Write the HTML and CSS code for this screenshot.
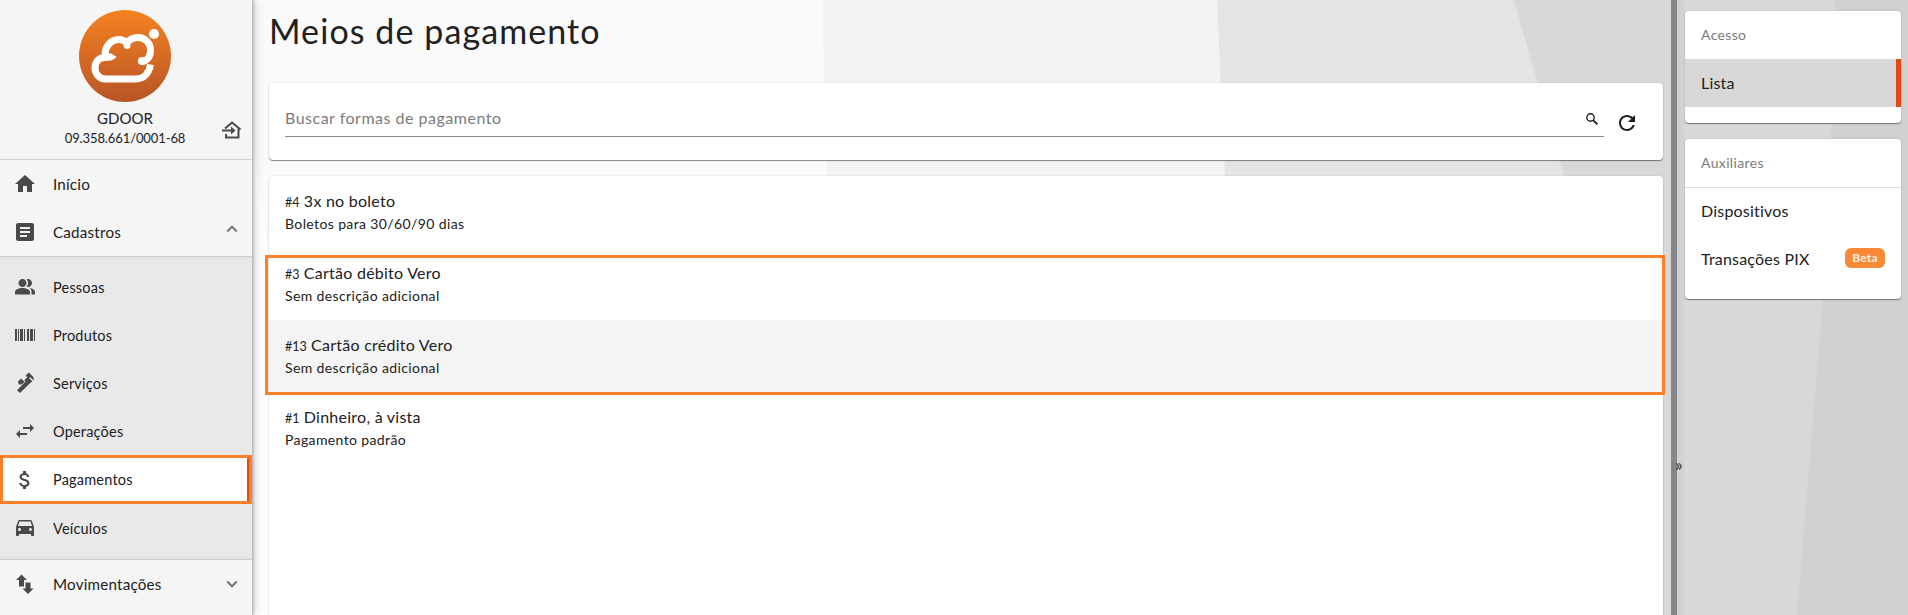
FILE: index.html
```html
<!DOCTYPE html>
<html lang="pt-BR">
<head>
<meta charset="utf-8">
<title>Meios de pagamento</title>
<link rel="stylesheet" href="styles.css">
</head>
<body>
<div class="app">
  <svg class="backdrop" viewBox="0 0 1908 615" preserveAspectRatio="none" aria-hidden="true">
    <rect width="1908" height="615" fill="#fafafa"/>
    <path d="M252 130L256 165L267 242H290V615H252z" fill="#fff"/>
    <path d="M822 0H1908V615H840z" fill="#f3f3f3"/>
    <path d="M1217 0H1908V615H1245z" fill="#e4e4e4"/>
    <path d="M1514 0H1908V615H1600L1564 176z" fill="#d8d8d8"/>
    <path d="M1835.5 0H1908V615H1797L1823 300L1831 139z" fill="#d0d0d0"/>
  </svg>

  <aside class="sidebar">
    <header class="company">
      <svg class="logo" viewBox="0 0 92 92">
        <defs><linearGradient id="lg" x1="0" y1="0" x2="0" y2="1"><stop offset="0" stop-color="#f58220"/><stop offset="1" stop-color="#b85427"/></linearGradient></defs>
        <circle cx="46" cy="46" r="46" fill="url(#lg)"/>
        <g fill="none" stroke="#fff" stroke-width="7">
          <path d="M71.500 54.500C70 63 65 69 57 69H27C20 69 16 63.500 16 58C16 52 20 47.500 26 47.500C30 47.500 33 47.500 34.500 45M26.500 47.500C24.500 37 32 29.500 40 29.500C44 29.500 46 31 48 33C50 30 53 27.500 59 27.500C67 27.500 71.500 34 71.500 40C71.500 47 68 51 63 52"/>
        </g>
        <circle cx="48" cy="35.500" r="3.400" fill="#fff"/><circle cx="63" cy="51" r="4" fill="#fff"/>
        <circle cx="75" cy="24" r="5" fill="#fff"/>
      </svg>
      <div class="company-name">GDOOR</div>
      <div class="company-id">09.358.661/0001-68</div>
      <svg class="exit" viewBox="0 0 20 18" fill="none" stroke="#4a4a4a" stroke-width="2"><path d="M3 7.500L10 1.500L18.500 8.500M16.500 7V16.500H4V13M0 9.500H11"/><path d="M9 5.500L13.500 9.500L9 13.500z" fill="#4a4a4a" stroke="none"/></svg>
    </header>
    <nav>
      <a class="item"><svg class="icon" viewBox="0 0 24 24"><path d="M10 20v-6h4v6h5v-8h3L12 3 2 12h3v8z"/></svg>Início</a>
      <a class="item"><svg class="icon" viewBox="0 0 24 24"><path d="M19 3H5c-1.100 0-2 .9-2 2v14c0 1.100.9 2 2 2h14c1.100 0 2-.9 2-2V5c0-1.100-.9-2-2-2zm-5 14H7v-2h7v2zm3-4H7v-2h10v2zm0-4H7V7h10v2z"/></svg>Cadastros<svg class="chevron chevron-up" viewBox="0 0 12 8"><path d="M1.200 6.500L6 1.700L10.800 6.500"/></svg></a>
      <div class="submenu">
        <a class="item"><svg class="icon" viewBox="0 0 24 24"><path d="M16.500 13.100C18 14 18.500 15.300 18.500 17v2.500H22v-2.500c0-2.200-2.800-3.500-5.500-3.900zM15 12c2.210 0 4-1.790 4-4s-1.790-4-4-4c-.47 0-.91.100-1.330.24C14.500 5.270 15 6.580 15 8s-.5 2.730-1.330 3.760c.42.140.86.240 1.330.24zM9.500 12c2.210 0 4-1.790 4-4s-1.790-4-4-4-4 1.790-4 4 1.790 4 4 4zm0 1c-2.670 0-7.500 1.340-7.500 4v2.500h15V17c0-2.660-4.830-4-7.500-4z"/></svg>Pessoas</a>
        <a class="item"><svg class="icon" viewBox="0 0 24 24"><path d="M2 6h2v12H2zM5 6h1v12H5zM7 6h3v12H7zM11 6h1v12h-1zM14 6h2v12h-2zM17 6h3v12h-3zM21 6h1v12h-1z"/></svg>Produtos</a>
        <a class="item"><svg class="icon" viewBox="0 0 24 24"><path d="M4 19.200L12.600 10.600L11.200 9.200L14.200 6.200L12.600 4.600L15.800 1.600L20.600 6.300V9.500L17.300 6.300L16.200 7.400L19.400 10.300L15.600 13.400L7 22zM5 10.600L8 7.600L11.600 10.800L8.600 13.400H5.800z"/></svg>Serviços</a>
        <a class="item"><svg class="icon" viewBox="0 0 24 24"><path d="M7 11L3 15l4 4v-3h7v-2H7v-3zM21 9l-4-4v3h-7v2h7v3l4-4z"/></svg>Operações</a>
        <a class="item active"><svg class="icon" viewBox="0 0 24 24"><path d="M11.800 10.900c-2.270-.59-3-1.200-3-2.150 0-1.090 1.010-1.850 2.700-1.850 1.780 0 2.440.85 2.500 2.100h2.210c-.07-1.720-1.120-3.300-3.210-3.810V3h-3v2.160c-1.940.42-3.500 1.680-3.500 3.610 0 2.310 1.910 3.460 4.700 4.130 2.500.6 3 1.480 3 2.410 0 .69-.49 1.790-2.700 1.790-2.060 0-2.870-.92-2.980-2.100h-2.200c.12 2.190 1.760 3.420 3.680 3.830V21h3v-2.150c1.950-.37 3.500-1.500 3.500-3.550 0-2.840-2.430-3.810-4.700-4.400z"/></svg>Pagamentos</a>
        <a class="item"><svg class="icon" viewBox="0 0 24 24"><path d="M18.920 5.010C18.720 4.420 18.160 4 17.500 4h-11c-.66 0-1.210.42-1.420 1.010L3 11v8c0 .55.450 1 1 1h1c.55 0 1-.45 1-1v-1h12v1c0 .55.450 1 1 1h1c.55 0 1-.45 1-1v-8l-2.080-5.990zM6.500 15c-.83 0-1.500-.67-1.500-1.500S5.670 12 6.500 12s1.500.67 1.500 1.500S7.330 15 6.500 15zm11 0c-.83 0-1.500-.67-1.500-1.500s.67-1.500 1.500-1.500 1.500.67 1.500 1.500-.67 1.500-1.500 1.500zM5 10l1.500-4.500h11L19 10H5z"/></svg>Veículos</a>
      </div>
      <a class="item"><svg class="icon" viewBox="0 0 24 24"><path d="M9 3L3.500 8.500H6.500V15H11.500V8.500H14.500zM13 11H18V17H21L15.500 22.500L10 17H13z" transform="translate(-.5 -.5)"/></svg>Movimentações<svg class="chevron" viewBox="0 0 12 8"><path d="M1.200 1.500L6 6.300L10.800 1.500"/></svg></a>
    </nav>
  </aside>

  <main class="content">
    <h1>Meios de pagamento</h1>
    <section class="card search">
      <div class="field"><span>Buscar formas de pagamento</span>
        <svg class="lens" viewBox="0 0 12 12" fill="none" stroke="#1d1d1d"><circle cx="4.500" cy="4.500" r="3.700" stroke-width="1.400"/><path d="M7.300 7.300L11.300 11.300" stroke-width="1.900"/></svg>
      </div>
      <svg class="refresh" viewBox="0 0 24 24"><path d="M17.650 6.350C16.200 4.900 14.210 4 12 4c-4.420 0-7.990 3.580-7.990 8s3.570 8 7.990 8c3.730 0 6.840-2.550 7.730-6h-2.080c-.82 2.330-3.040 4-5.650 4-3.310 0-6-2.690-6-6s2.690-6 6-6c1.660 0 3.140.69 4.220 1.780L13 11h7V4l-2.350 2.350z"/></svg>
    </section>
    <section class="card list">
      <article class="row"><h2><small>#4</small> 3x no boleto</h2><p>Boletos para 30/60/90 dias</p></article>
      <div class="marked">
        <article class="row"><h2><small>#3</small> Cartão débito Vero</h2><p>Sem descrição adicional</p></article>
        <article class="row hover"><h2><small>#13</small> Cartão crédito Vero</h2><p>Sem descrição adicional</p></article>
      </div>
      <article class="row"><h2><small>#1</small> Dinheiro, à vista</h2><p>Pagamento padrão</p></article>
    </section>
  </main>

  <div class="splitter"><span class="collapse">»</span></div>

  <aside class="panel">
    <section class="card access">
      <h3>Acesso</h3>
      <a class="link selected">Lista</a>
    </section>
    <section class="card extra">
      <h3>Auxiliares</h3>
      <a class="link">Dispositivos</a>
      <a class="link">Transações PIX<span class="badge">Beta</span></a>
    </section>
  </aside>
</div>
</body>
</html>
```
FILE: styles.css
```css
* { box-sizing: border-box; }
body { margin: 0; overflow: hidden; font-family: Lato, "Open Sans", sans-serif; color: #212121; }
h1, h2, h3, p { margin: 0; font-weight: 400; }
svg { display: block; flex: none; }
.app { position: relative; display: flex; width: 1908px; height: 615px; overflow: hidden; }
.backdrop { position: absolute; inset: 0; width: 100%; height: 100%; }

.sidebar { position: relative; width: 252px; flex: none; background: #f5f5f5; box-shadow: 1px 0 2px 1px rgba(0,0,0,.16), 2px 0 10px rgba(0,0,0,.2); }
.company { position: relative; display: flex; flex-direction: column; align-items: center; height: 160px; padding: 10px 2px 0 0; border-bottom: 1px solid #d4d4d4; }
.logo { width: 92px; height: 92px; }
.company-name { margin-top: 5px; font-size: 15px; line-height: 22px; }
.company-id { font-size: 13px; line-height: 18px; letter-spacing: -.1px; }
.exit { position: absolute; left: 222px; top: 121px; width: 20px; height: 18px; }
.item { display: flex; align-items: center; height: 48px; padding-left: 13px; font-size: 15.200px; letter-spacing: .2px; }
.icon { width: 24px; height: 24px; margin-right: 16px; fill: #4a4a4a; }
.chevron { width: 12px; height: 8px; margin-left: auto; margin-right: 14px; fill: none; stroke: #777; stroke-width: 2; }
.chevron-up { margin-bottom: 6px; }
.submenu { height: 304px; padding-top: 6px; background: linear-gradient(#dedede, #e9e9e9 3px, #e9e9e9 299px, #dedede); border-top: 1px solid #cbcbcb; border-bottom: 1px solid #cbcbcb; }
.submenu .item { font-size: 14.500px; }
.submenu .active { height: 49px; padding-left: 10px; background: #fff; border: 3px solid #ff8127; box-shadow: inset -2px 0 #e54817; }

.content { position: relative; display: flex; flex-direction: column; width: 1419px; padding: 0 8px 0 17px; }
h1 { height: 83px; padding-top: 10px; font-size: 34px; line-height: 42px; letter-spacing: 1.080px; }
.card { background: #fff; border-radius: 4px; box-shadow: 0 1px 1px rgba(0,0,0,.45), 0 0 2px rgba(0,0,0,.12); }
.search { display: flex; flex: none; height: 77px; margin-bottom: 16px; padding: 19px 24px 0 16px; }
.field { display: flex; align-items: center; justify-content: space-between; width: 1319px; height: 35px; padding: 0 6px 2px 0; border-bottom: 1px solid #8a8a8a; color: #7b7b7b; font-size: 16px; letter-spacing: .5px; }
.field span { margin-bottom: 2px; }
.lens { width: 12px; height: 12px; margin-top: 2px; }
.refresh { width: 24px; height: 24px; margin: 9px 0 0 11px; fill: #1d1d1d; }
.list { flex: 1; border-radius: 4px 4px 0 0; }
.row { height: 72px; padding: 13px 16px 0; }
.row h2 { font-size: 16px; line-height: 23px; letter-spacing: .25px; }
.row small { font-size: 12.500px; letter-spacing: 0; }
.row p { font-size: 14px; line-height: 20px; letter-spacing: .38px; }
.hover { background: #f4f4f4; }
.marked { position: relative; }
.marked::after { content: ""; position: absolute; inset: 7px -2px -3px -4px; border: 3px solid #ff8127; }

.splitter { position: relative; z-index: 1; width: 6px; flex: none; background: #868686; }
.collapse { position: absolute; left: 4px; top: 453px; font-size: 18px; line-height: 22px; color: #333; }
.panel { position: relative; display: flex; flex-direction: column; gap: 16px; width: 231px; padding: 11px 7px 0 1px; border-left: 7px solid #d2d2d2; }
.access { height: 112px; }
.extra { height: 160px; }
h3 { height: 48px; padding-left: 16px; font-size: 14px; line-height: 48px; letter-spacing: .35px; color: #7b7b7b; }
.extra h3 { height: 49px; border-bottom: 1px solid #dedede; }
.link { display: flex; align-items: center; justify-content: space-between; height: 48px; padding: 0 16px 2px; font-size: 16px; letter-spacing: .2px; }
.extra h3 + .link { margin-top: -1px; }
.selected { background: #d8d8d8; border-right: 5px solid #e54817; }
.badge { width: 40px; height: 20px; border-radius: 6px; background: #f88935; color: #fdeee0; font-size: 12px; font-weight: 700; line-height: 20px; text-align: center; }
```
